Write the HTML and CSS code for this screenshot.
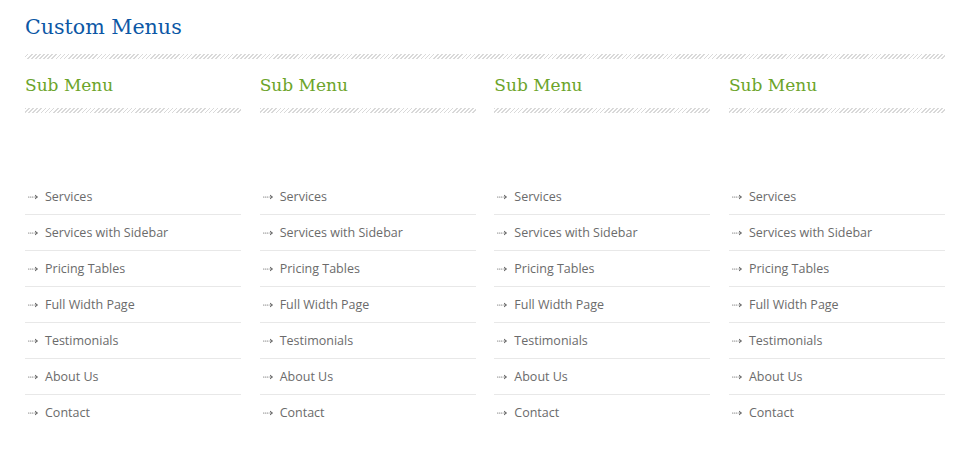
FILE: index.html
```html
<!DOCTYPE html>
<html>
<head>
<meta charset="utf-8">
<link rel="stylesheet" href="styles.css">
</head>
<body>
<div class="page">
  <h1 class="title">Custom Menus</h1>
  <div class="hatch"></div>
  <div class="cols">
    <div class="col">
      <h2 class="sub">Sub Menu</h2>
      <div class="hatch"></div>
      <ul class="menu">
        <li><svg class="arr" viewBox="0 0 10 6"><circle cx="0.8" cy="3" r="0.6"/><circle cx="2.8" cy="3" r="0.6"/><circle cx="4.8" cy="3" r="0.6"/><path d="M6.6 3H9.4M7 1L9.4 3L7 5"/></svg>Services</li>
        <li><svg class="arr" viewBox="0 0 10 6"><circle cx="0.8" cy="3" r="0.6"/><circle cx="2.8" cy="3" r="0.6"/><circle cx="4.8" cy="3" r="0.6"/><path d="M6.6 3H9.4M7 1L9.4 3L7 5"/></svg>Services with Sidebar</li>
        <li><svg class="arr" viewBox="0 0 10 6"><circle cx="0.8" cy="3" r="0.6"/><circle cx="2.8" cy="3" r="0.6"/><circle cx="4.8" cy="3" r="0.6"/><path d="M6.6 3H9.4M7 1L9.4 3L7 5"/></svg>Pricing Tables</li>
        <li><svg class="arr" viewBox="0 0 10 6"><circle cx="0.8" cy="3" r="0.6"/><circle cx="2.8" cy="3" r="0.6"/><circle cx="4.8" cy="3" r="0.6"/><path d="M6.6 3H9.4M7 1L9.4 3L7 5"/></svg>Full Width Page</li>
        <li><svg class="arr" viewBox="0 0 10 6"><circle cx="0.8" cy="3" r="0.6"/><circle cx="2.8" cy="3" r="0.6"/><circle cx="4.8" cy="3" r="0.6"/><path d="M6.6 3H9.4M7 1L9.4 3L7 5"/></svg>Testimonials</li>
        <li><svg class="arr" viewBox="0 0 10 6"><circle cx="0.8" cy="3" r="0.6"/><circle cx="2.8" cy="3" r="0.6"/><circle cx="4.8" cy="3" r="0.6"/><path d="M6.6 3H9.4M7 1L9.4 3L7 5"/></svg>About Us</li>
        <li><svg class="arr" viewBox="0 0 10 6"><circle cx="0.8" cy="3" r="0.6"/><circle cx="2.8" cy="3" r="0.6"/><circle cx="4.8" cy="3" r="0.6"/><path d="M6.6 3H9.4M7 1L9.4 3L7 5"/></svg>Contact</li>
      </ul>
    </div>
    <div class="col">
      <h2 class="sub">Sub Menu</h2>
      <div class="hatch"></div>
      <ul class="menu">
        <li><svg class="arr" viewBox="0 0 10 6"><circle cx="0.8" cy="3" r="0.6"/><circle cx="2.8" cy="3" r="0.6"/><circle cx="4.8" cy="3" r="0.6"/><path d="M6.6 3H9.4M7 1L9.4 3L7 5"/></svg>Services</li>
        <li><svg class="arr" viewBox="0 0 10 6"><circle cx="0.8" cy="3" r="0.6"/><circle cx="2.8" cy="3" r="0.6"/><circle cx="4.8" cy="3" r="0.6"/><path d="M6.6 3H9.4M7 1L9.4 3L7 5"/></svg>Services with Sidebar</li>
        <li><svg class="arr" viewBox="0 0 10 6"><circle cx="0.8" cy="3" r="0.6"/><circle cx="2.8" cy="3" r="0.6"/><circle cx="4.8" cy="3" r="0.6"/><path d="M6.6 3H9.4M7 1L9.4 3L7 5"/></svg>Pricing Tables</li>
        <li><svg class="arr" viewBox="0 0 10 6"><circle cx="0.8" cy="3" r="0.6"/><circle cx="2.8" cy="3" r="0.6"/><circle cx="4.8" cy="3" r="0.6"/><path d="M6.6 3H9.4M7 1L9.4 3L7 5"/></svg>Full Width Page</li>
        <li><svg class="arr" viewBox="0 0 10 6"><circle cx="0.8" cy="3" r="0.6"/><circle cx="2.8" cy="3" r="0.6"/><circle cx="4.8" cy="3" r="0.6"/><path d="M6.6 3H9.4M7 1L9.4 3L7 5"/></svg>Testimonials</li>
        <li><svg class="arr" viewBox="0 0 10 6"><circle cx="0.8" cy="3" r="0.6"/><circle cx="2.8" cy="3" r="0.6"/><circle cx="4.8" cy="3" r="0.6"/><path d="M6.6 3H9.4M7 1L9.4 3L7 5"/></svg>About Us</li>
        <li><svg class="arr" viewBox="0 0 10 6"><circle cx="0.8" cy="3" r="0.6"/><circle cx="2.8" cy="3" r="0.6"/><circle cx="4.8" cy="3" r="0.6"/><path d="M6.6 3H9.4M7 1L9.4 3L7 5"/></svg>Contact</li>
      </ul>
    </div>
    <div class="col">
      <h2 class="sub">Sub Menu</h2>
      <div class="hatch"></div>
      <ul class="menu">
        <li><svg class="arr" viewBox="0 0 10 6"><circle cx="0.8" cy="3" r="0.6"/><circle cx="2.8" cy="3" r="0.6"/><circle cx="4.8" cy="3" r="0.6"/><path d="M6.6 3H9.4M7 1L9.4 3L7 5"/></svg>Services</li>
        <li><svg class="arr" viewBox="0 0 10 6"><circle cx="0.8" cy="3" r="0.6"/><circle cx="2.8" cy="3" r="0.6"/><circle cx="4.8" cy="3" r="0.6"/><path d="M6.6 3H9.4M7 1L9.4 3L7 5"/></svg>Services with Sidebar</li>
        <li><svg class="arr" viewBox="0 0 10 6"><circle cx="0.8" cy="3" r="0.6"/><circle cx="2.8" cy="3" r="0.6"/><circle cx="4.8" cy="3" r="0.6"/><path d="M6.6 3H9.4M7 1L9.4 3L7 5"/></svg>Pricing Tables</li>
        <li><svg class="arr" viewBox="0 0 10 6"><circle cx="0.8" cy="3" r="0.6"/><circle cx="2.8" cy="3" r="0.6"/><circle cx="4.8" cy="3" r="0.6"/><path d="M6.6 3H9.4M7 1L9.4 3L7 5"/></svg>Full Width Page</li>
        <li><svg class="arr" viewBox="0 0 10 6"><circle cx="0.8" cy="3" r="0.6"/><circle cx="2.8" cy="3" r="0.6"/><circle cx="4.8" cy="3" r="0.6"/><path d="M6.6 3H9.4M7 1L9.4 3L7 5"/></svg>Testimonials</li>
        <li><svg class="arr" viewBox="0 0 10 6"><circle cx="0.8" cy="3" r="0.6"/><circle cx="2.8" cy="3" r="0.6"/><circle cx="4.8" cy="3" r="0.6"/><path d="M6.6 3H9.4M7 1L9.4 3L7 5"/></svg>About Us</li>
        <li><svg class="arr" viewBox="0 0 10 6"><circle cx="0.8" cy="3" r="0.6"/><circle cx="2.8" cy="3" r="0.6"/><circle cx="4.8" cy="3" r="0.6"/><path d="M6.6 3H9.4M7 1L9.4 3L7 5"/></svg>Contact</li>
      </ul>
    </div>
    <div class="col">
      <h2 class="sub">Sub Menu</h2>
      <div class="hatch"></div>
      <ul class="menu">
        <li><svg class="arr" viewBox="0 0 10 6"><circle cx="0.8" cy="3" r="0.6"/><circle cx="2.8" cy="3" r="0.6"/><circle cx="4.8" cy="3" r="0.6"/><path d="M6.6 3H9.4M7 1L9.4 3L7 5"/></svg>Services</li>
        <li><svg class="arr" viewBox="0 0 10 6"><circle cx="0.8" cy="3" r="0.6"/><circle cx="2.8" cy="3" r="0.6"/><circle cx="4.8" cy="3" r="0.6"/><path d="M6.6 3H9.4M7 1L9.4 3L7 5"/></svg>Services with Sidebar</li>
        <li><svg class="arr" viewBox="0 0 10 6"><circle cx="0.8" cy="3" r="0.6"/><circle cx="2.8" cy="3" r="0.6"/><circle cx="4.8" cy="3" r="0.6"/><path d="M6.6 3H9.4M7 1L9.4 3L7 5"/></svg>Pricing Tables</li>
        <li><svg class="arr" viewBox="0 0 10 6"><circle cx="0.8" cy="3" r="0.6"/><circle cx="2.8" cy="3" r="0.6"/><circle cx="4.8" cy="3" r="0.6"/><path d="M6.6 3H9.4M7 1L9.4 3L7 5"/></svg>Full Width Page</li>
        <li><svg class="arr" viewBox="0 0 10 6"><circle cx="0.8" cy="3" r="0.6"/><circle cx="2.8" cy="3" r="0.6"/><circle cx="4.8" cy="3" r="0.6"/><path d="M6.6 3H9.4M7 1L9.4 3L7 5"/></svg>Testimonials</li>
        <li><svg class="arr" viewBox="0 0 10 6"><circle cx="0.8" cy="3" r="0.6"/><circle cx="2.8" cy="3" r="0.6"/><circle cx="4.8" cy="3" r="0.6"/><path d="M6.6 3H9.4M7 1L9.4 3L7 5"/></svg>About Us</li>
        <li><svg class="arr" viewBox="0 0 10 6"><circle cx="0.8" cy="3" r="0.6"/><circle cx="2.8" cy="3" r="0.6"/><circle cx="4.8" cy="3" r="0.6"/><path d="M6.6 3H9.4M7 1L9.4 3L7 5"/></svg>Contact</li>
      </ul>
    </div>
  </div>
</div>
</body>
</html>
```
FILE: styles.css
```css
html, body {
  margin: 0;
  padding: 0;
  background: #fff;
}
.page {
  width: 920px;
  padding: 13px 0 0 25px;
}
.title {
  margin: 0;
  font-family: "DejaVu Serif", serif;
  font-weight: normal;
  font-size: 20.6px;
  line-height: 28px;
  color: #0b57a5;
}
.hatch {
  height: 5px;
  background-image: repeating-linear-gradient(-45deg, transparent 0 1.7px, #d9d9d9 1.7px 2.9px);
}
.page > .hatch {
  margin-top: 13px;
}
.cols {
  display: grid;
  grid-template-columns: repeat(4, 216px);
  column-gap: 18.67px;
}
.sub {
  margin: 13px 0 0;
  font-family: "DejaVu Serif", serif;
  font-weight: normal;
  font-size: 17px;
  line-height: 26px;
  color: #6ca42a;
}
.col .hatch {
  margin-top: 10px;
}
.menu {
  list-style: none;
  margin: 66px 0 0;
  padding: 0;
}
.menu li {
  display: flex;
  align-items: center;
  height: 35px;
  border-bottom: 1px solid #e8e8e8;
  font-family: "Open Sans", sans-serif;
  font-size: 12.5px;
  color: #6b6b6b;
}
.menu li:last-child {
  border-bottom: none;
}
.arr {
  width: 10px;
  height: 6px;
  margin: 0 7px 0 3px;
  fill: #555;
  stroke: none;
}
.arr path {
  fill: none;
  stroke: #555;
  stroke-width: 0.9;
}
```
